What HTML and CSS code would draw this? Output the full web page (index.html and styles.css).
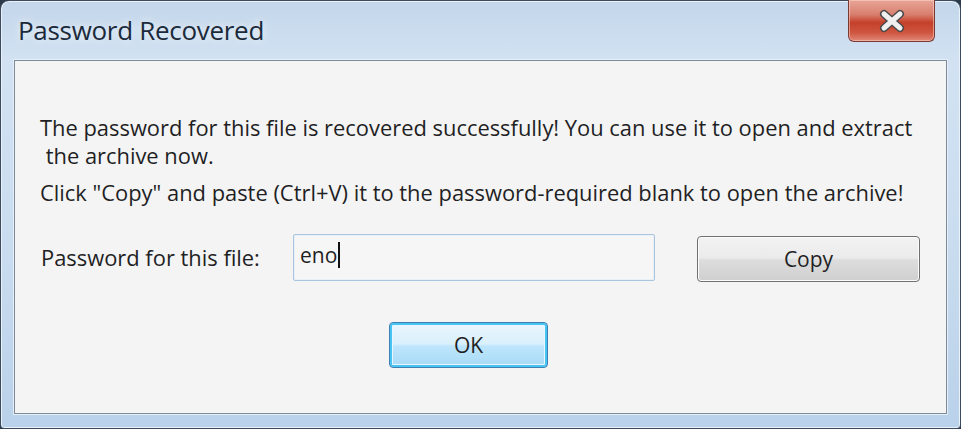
FILE: index.html
```html
<!DOCTYPE html>
<html>
<head>
<meta charset="utf-8">
<link rel="stylesheet" href="styles.css">
</head>
<body>
<div class="window">
  <div class="titlebar">
    <div class="title">Password Recovered</div>
    <div class="close" aria-label="Close">
      <svg width="40" height="24" viewBox="0 0 40 24">
        <path d="M12 5 L28 19 M28 5 L12 19" stroke="#4a4a4a" stroke-width="8" stroke-linecap="round"/>
        <path d="M12 5 L28 19 M28 5 L12 19" stroke="#f0f0f0" stroke-width="5" stroke-linecap="round"/>
      </svg>
    </div>
  </div>
  <div class="client">
    <p class="msg msg-first">The password for this file is recovered successfully! You can use it to open and extract<br>&nbsp;the archive now.</p>
    <p class="msg msg-second">Click "Copy" and paste (Ctrl+V) it to the password-required blank to open the archive!</p>
    <div class="row">
      <span class="label">Password for this file:</span>
      <div class="field"><span class="value">eno</span><span class="caret"></span></div>
      <div class="btn btn-copy">Copy</div>
    </div>
    <div class="actions">
      <div class="btn btn-ok">OK</div>
    </div>
  </div>
</div>
</body>
</html>
```
FILE: styles.css
```css
html, body {
  margin: 0;
  padding: 0;
  background: #2b3a4a;
}
body {
  width: 961px;
  height: 429px;
  overflow: hidden;
  font-family: "Open Sans", "Noto Sans", sans-serif;
}
.window {
  box-sizing: border-box;
  width: 961px;
  height: 429px;
  border: 1px solid #3c4c5e;
  border-radius: 9px 9px 4px 4px;
  background: linear-gradient(180deg, #c3d6ea 0%, #d2e2f3 14%, #c9dcef 60%, #b9d1ea 100%);
  display: flex;
  flex-direction: column;
  box-shadow: inset 0 0 0 1px #e9f1f9;
}
.titlebar {
  height: 59px;
  display: flex;
  align-items: flex-start;
  justify-content: space-between;
  padding: 0 25px 0 17px;
}
.title {
  margin-top: 11px;
  font-size: 26px;
  line-height: 36px;
  color: #1b2a3a;
  letter-spacing: -0.3px;
  text-shadow: 0 0 8px rgba(255,255,255,0.9);
}
.close {
  width: 87px;
  height: 42px;
  margin-top: -1px;
  box-sizing: border-box;
  border: 1px solid #7a3a32;
  border-top: none;
  border-radius: 0 0 6px 6px;
  background: linear-gradient(180deg, #e8a597 0%, #d9806f 35%, #c4402a 55%, #cf5640 80%, #e1887a 100%);
  box-shadow: inset 0 0 0 1px rgba(255,220,210,0.5);
  display: flex;
  align-items: center;
  justify-content: center;
}
.client {
  flex: 1;
  margin: 0 13px 14px 13px;
  border: 1px solid #7c8a99;
  background: #f4f4f4;
  padding: 0 0 0 25px;
  color: #1f1f24;
  font-size: 21.9px;
  box-shadow: 0 0 0 1px #e6eef7;
}
.msg {
  margin: 0;
  line-height: 28px;
}
.msg-first {
  margin-top: 53px;
}
.msg-second {
  margin-top: 9px;
}
.row {
  display: flex;
  align-items: flex-start;
  margin-top: 27px;
}
.label {
  width: 252px;
  padding-left: 1px;
  line-height: 47px;
}
.field {
  box-sizing: border-box;
  width: 362px;
  height: 47px;
  border: 1px solid #a9c4de;
  border-radius: 2px;
  background: #f6f6f6;
  display: flex;
  align-items: center;
  padding-left: 6px;
  padding-bottom: 6px;
  box-shadow: inset 0 0 0 1px #e9f0f7;
}
.value {
  font-size: 21px;
}
.caret {
  width: 2px;
  height: 26px;
  background: #111;
  margin-left: 1px;
}
.btn {
  box-sizing: border-box;
  display: flex;
  align-items: center;
  justify-content: center;
  border-radius: 4px;
  font-size: 21px;
  color: #1f1f24;
}
.btn-copy {
  width: 223px;
  height: 46px;
  margin-left: 42px;
  margin-top: 2px;
  border: 1px solid #707070;
  background: linear-gradient(180deg, #f2f2f2 0%, #ebebeb 48%, #dddddd 52%, #cfcfcf 100%);
  box-shadow: inset 0 0 0 1px #fcfcfc;
}
.actions {
  display: flex;
  margin-top: 40px;
  padding-left: 349px;
}
.btn-ok {
  width: 159px;
  height: 46px;
  border: 1px solid #3c7fb1;
  background: linear-gradient(180deg, #eaf6fd 0%, #d9f0fc 48%, #bee6fd 52%, #a7d9f5 100%);
  box-shadow: inset 0 0 0 2px #48c4f4, inset 0 0 0 3px #e8f6fd;
}
```
